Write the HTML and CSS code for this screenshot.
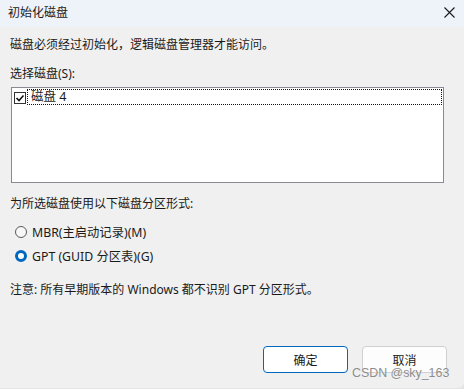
FILE: index.html
```html
<!DOCTYPE html>
<html lang="zh-CN">
<head>
    <meta charset="UTF-8">
    <title>初始化磁盘</title>
    <link rel="stylesheet" href="styles.css">
</head>
<body>
<div class="dialog">
    <div class="titlebar">
        <span class="title">初始化磁盘</span>
        <svg class="close" width="11" height="11" viewBox="0 0 11 11">
            <path d="M0.5 0.5 L10.5 10.5 M10.5 0.5 L0.5 10.5" stroke="#1a1a1a" stroke-width="1.1" fill="none"/>
        </svg>
    </div>
    <div class="content">
        <p class="intro">磁盘必须经过初始化，逻辑磁盘管理器才能访问。</p>
        <p class="label">选择磁盘(S):</p>
        <div class="disk-list">
            <div class="disk-item">
                <svg class="check" width="12" height="12" viewBox="0 0 12 12">
                    <rect x="0.5" y="0.5" width="11" height="11" fill="#fff" stroke="#333"/>
                    <path d="M2.5 6 L5 8.5 L9.5 3.5" stroke="#111" stroke-width="1.6" fill="none"/>
                </svg>
                <span class="disk-name">磁盘 4</span>
            </div>
        </div>
        <p class="label">为所选磁盘使用以下磁盘分区形式:</p>
        <div class="radio-row first">
            <span class="radio"></span>
            <span>MBR(主启动记录)(M)</span>
        </div>
        <div class="radio-row">
            <span class="radio checked"></span>
            <span>GPT (GUID 分区表)(G)</span>
        </div>
        <p class="note">注意: 所有早期版本的 Windows 都不识别 GPT 分区形式。</p>
        <div class="buttons">
            <button class="btn primary">确定</button>
            <button class="btn">取消</button>
        </div>
    </div>
    <div class="watermark">CSDN @sky_163</div>
</div>
</body>
</html>
```

FILE: styles.css
```css
html, body {
    margin: 0;
    padding: 0;
}

body {
    width: 464px;
    height: 389px;
    overflow: hidden;
    background-color: #e4e4e4;
    font-family: "Noto Sans", "Noto Sans CJK SC", sans-serif;
    font-size: 12px;
    color: #1a1a1a;
}

.dialog {
    position: relative;
    width: 464px;
    height: 388px;
    background-color: #f0f0f0;
    border-bottom-right-radius: 6px;
}

.titlebar {
    height: 27px;
    background-color: #eef2f9;
    display: flex;
    align-items: center;
    justify-content: space-between;
    padding: 0 9px 2px 8px;
    box-sizing: border-box;
}

.title {
    font-size: 12px;
    line-height: 16px;
}

.close {
    display: block;
}

.content {
    padding: 10px 20px 0 10px;
}

.content p {
    margin: 0;
    line-height: 16px;
}

.content .label {
    margin-top: 13px;
}

.disk-list {
    margin: 5px 0 0 1px;
    height: 93px;
    border: 1px solid #8a8a94;
    background-color: #fff;
    padding: 1px 1px 0 2px;
}

.disk-item {
    display: flex;
    align-items: center;
    gap: 1px;
}

.check {
    display: block;
    margin-top: 1px;
}

.disk-name {
    flex: 1;
    height: 14px;
    line-height: 14px;
    border: 1px dotted #111;
    padding-left: 3px;
    font-size: 12.5px;
    color: #1a1a1a;
}

.radio-row {
    display: flex;
    align-items: center;
    gap: 5px;
    height: 20px;
    padding-left: 5px;
    margin-top: 4px;
    font-size: 12.3px;
}

.radio-row.first {
    margin-top: 10px;
}

.radio {
    width: 12px;
    height: 12px;
    box-sizing: border-box;
    border: 1px solid #5a5a5a;
    border-radius: 50%;
    background-color: #f7f7f7;
}

.radio.checked {
    border: 3.5px solid #0067c0;
    background-color: #fff;
}

.content .note {
    margin-top: 16px;
}

.buttons {
    display: flex;
    justify-content: flex-end;
    gap: 14px;
    margin-top: 48px;
    margin-right: -3px;
}

.btn {
    width: 85px;
    height: 27px;
    font-family: "Noto Sans CJK SC", sans-serif;
    font-size: 12px;
    color: #1a1a1a;
    background-color: #fdfdfd;
    border: 1px solid #d0d0d0;
    border-radius: 4px;
    padding: 0;
}

.btn.primary {
    border: 1px solid #0067c0;
    background-color: #fff;
}

.watermark {
    position: absolute;
    left: 352px;
    top: 366px;
    white-space: nowrap;
    font-family: "Liberation Sans", sans-serif;
    font-size: 12.4px;
    color: #8c8c8c;
    text-shadow: 0 0 1px #fff;
}
```
